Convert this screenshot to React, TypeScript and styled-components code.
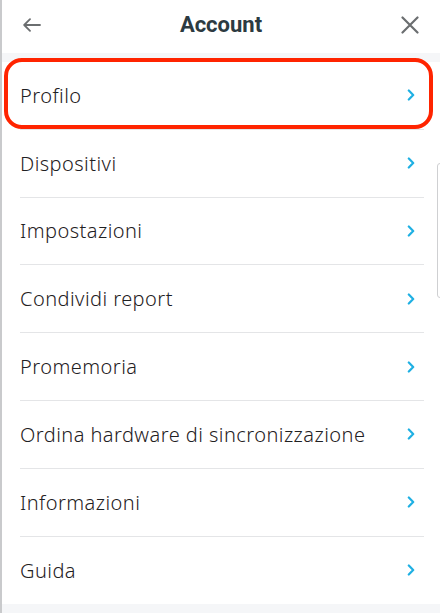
import styled, { createGlobalStyle } from 'styled-components';

const GlobalStyle = createGlobalStyle`
	html, body {
		margin: 0;
		padding: 0;
		background: #f5f6f8;
	}
	* {
		box-sizing: border-box;
	}
`

const items = [
	'Profilo',
	'Dispositivi',
	'Impostazioni',
	'Condividi report',
	'Promemoria',
	'Ordina hardware di sincronizzazione',
	'Informazioni',
	'Guida',
];

function App() {
	return (
		<Page>
			<GlobalStyle />
			<Header>
				<IconButton aria-label="Indietro">
					<svg width="18" height="14" viewBox="0 0 18 14" fill="none" stroke="#6b6e70" strokeWidth="1.8" strokeLinecap="round" strokeLinejoin="round">
						<path d="M17 7H1.5M7 1.2L1.2 7L7 12.8" />
					</svg>
				</IconButton>
				<Title>Account</Title>
				<IconButton aria-label="Chiudi">
					<svg width="18" height="18" viewBox="0 0 18 18" fill="none" stroke="#6b6e70" strokeWidth="2.2" strokeLinecap="round">
						<path d="M1.5 1.5L16.5 16.5M16.5 1.5L1.5 16.5" />
					</svg>
				</IconButton>
			</Header>
			<List>
				{items.map((label, i) => (
					<Row key={label} highlighted={i === 0} last={i === items.length - 1}>
						<Label>{label}</Label>
						<svg width="8" height="12" viewBox="0 0 8 12" fill="none" stroke="#1fb0e3" strokeWidth="2.2" strokeLinecap="round" strokeLinejoin="round">
							<path d="M1.8 1.5L6.2 6L1.8 10.5" />
						</svg>
					</Row>
				))}
				<ScrollHint />
			</List>
		</Page>
	);
}

export default App;

const Page = styled.div`
	display: flex;
	flex-direction: column;
	width: 440px;
	height: 613px;
	background: #f5f6f8;
	border-left: 2px solid #c9cacc;
	overflow: hidden;
`

const Header = styled.div`
	display: flex;
	align-items: center;
	justify-content: space-between;
	height: 53px;
	padding: 0 18px 4px 18px;
	background: #ffffff;
`

const IconButton = styled.button`
	display: flex;
	align-items: center;
	justify-content: center;
	width: 24px;
	height: 24px;
	padding: 0;
	border: none;
	background: none;
	cursor: pointer;
`

const Title = styled.div`
	font-family: Roboto, "Liberation Sans", sans-serif;
	font-weight: 700;
	font-size: 22px;
	color: #2c3a41;
`

const List = styled.div`
	position: relative;
	display: flex;
	flex-direction: column;
	margin-top: 9px;
	background: #ffffff;
`

type RowProps = {
	highlighted?: boolean;
	last?: boolean;
};

const Row = styled.div<RowProps>`
	position: relative;
	display: flex;
	align-items: center;
	justify-content: space-between;
	height: 67.8px;
	margin: 0 16px 0 18px;
	padding: 0 9px 0 0;
	border-bottom: ${props => props.last ? 'none' : '1.5px solid #e4e5e7'};

	&::after {
		content: '';
		display: ${props => props.highlighted ? 'block' : 'none'};
		position: absolute;
		left: -16px;
		right: -9px;
		top: -4px;
		bottom: 0px;
		border: 4px solid #ff2400;
		border-radius: 18px;
	}
`

const Label = styled.div`
	font-family: "Noto Sans", sans-serif;
	font-weight: 350;
	font-size: 20px;
	letter-spacing: 0.45px;
	color: #1f2123;
`

const ScrollHint = styled.div`
	position: absolute;
	right: -3px;
	top: 101px;
	width: 6px;
	height: 135px;
	border: 1px solid #cfd0d2;
	border-radius: 3px;
	background: #ffffff;
`
